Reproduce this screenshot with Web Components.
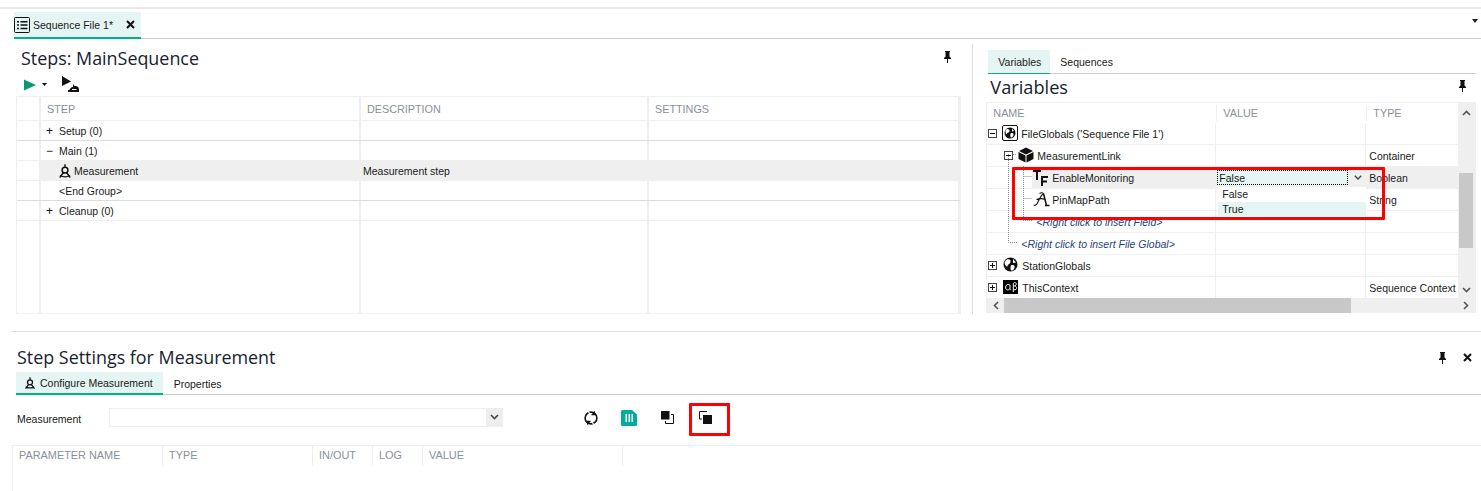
<!DOCTYPE html>
<html lang="en"><head><meta charset="utf-8"><title>Sequence File 1</title>
<style>
html,body{margin:0;padding:0;background:#fff}
body{font:10.5px/16px "Liberation Sans",Arial,sans-serif;color:#1a1a1a;overflow:hidden}
</style></head><body>
<template id="pin"><svg width="11" height="12" viewBox="0 0 11 12"><path d="M3 0h5v1H7.500v4.500L9 7v1H2V7l1.500-1.500V1H3zM5 8h1v4H5z" fill="#111"/></svg></template>
<app-shell></app-shell>
<script>
const ICON={
 compass:`<svg width="14" height="14" viewBox="0 0 14 14" fill="none" stroke="#111"><circle cx="7" cy="6.200" r="2.900" stroke-width="1.500"/><path d="M7 .3v3M5.500 8.500 1.800 13.500M8.500 8.500l3.700 5M2 11.500c3 1.600 7 1.600 10 0" stroke-width="1.400"/></svg>`,
 globeBox:`<svg width="16" height="16" viewBox="0 0 16 16"><rect x=".5" y=".5" width="15" height="15" rx="1.500" fill="#fff" stroke="#111"/><circle cx="8" cy="8" r="5.500" fill="#111"/><path d="M5 4c2 0 3 1 2.500 2.500S5 7.500 4.500 9 3.500 7 3.500 6 4 4.500 5 4zM9 8c2 0 3 .500 2.500 2S10 13 9 12.500 8 9 9 8zM10 3.500l2 2.500-2 .500z" fill="#fff"/></svg>`,
 globe:`<svg width="15" height="15" viewBox="0 0 15 15"><circle cx="7.500" cy="7.500" r="7" fill="#111"/><path d="M4 2.500c2.500-.5 4 .5 3.500 2.500S5 7 4.500 9 2 8 1.700 6.500 2.500 3 4 2.500zM8.500 8c2.500 0 3.500.5 3 2.500S10 14 8.500 13.500 7.500 8.500 8.500 8zM10 2l3 3.500-3 .5z" fill="#fff"/></svg>`,
 cube:`<svg width="16" height="16" viewBox="0 0 16 16"><path d="M8 .5 15 4 8 7.500 1 4zM.5 5l7 3.600V15.500l-7-3.500zM15.500 5l-7 3.600V15.500l7-3.500z" fill="#111"/></svg>`,
 tf:`<svg width="15" height="16" viewBox="0 0 15 16" fill="#111"><path d="M0 0h8v2H5v8H3V2H0zM8 6h7v2h-5v2.500h4v2h-4V16H8z"/></svg>`,
 script:`<svg width="17" height="15" viewBox="0 0 17 15" fill="none" stroke="#111"><path d="M10.500 1.500 13.500 13.500M12 13.500h4.500" stroke-width="1.500"/><path d="M10.500 1.500C8 3 6 8 4.500 11 3.500 13 2 14 .8 12.800M3.500 7.500c2.500-1 6-1 8.500 0M6.500 1.500c1.500-1 3-1 4 0" stroke-width="1.100"/></svg>`,
 ab:`<svg width="15" height="14" viewBox="0 0 15 14"><rect width="15" height="14" fill="#000"/><path d="M7 5.200C6 4 3 4 2.700 7S5 11 7 8.500V5M7 8.500c.2 1.500.8 1.500 1.200 1.200M10.300 12V4c0-2 3-2 3 0 0 1.500-1.500 2-2 2 1.500 0 2.500 1 2.200 2.500S11 10.500 10.300 9" fill="none" stroke="#fff"/></svg>`
};
const sheet=`:host{display:block;box-sizing:border-box}*{box-sizing:border-box}`;
const def=(n,render)=>customElements.define(n,class extends HTMLElement{connectedCallback(){if(this.shadowRoot)return;this.attachShadow({mode:'open'}).innerHTML=`<style>${sheet}${render.css||''}</style>`+render(this)}});
const pinSvg=()=>document.getElementById('pin').innerHTML;

/* tab strip */
const tabsR=el=>`<div class="strip"><slot></slot></div>`;
tabsR.css=`.strip{display:flex;height:100%;border-bottom:1px solid #ccc}`;
def('x-tabs',tabsR);
const tabR=el=>`<slot></slot>`;
tabR.css=`:host{display:flex;align-items:center;height:var(--h,24px);padding:0 var(--p,10px);white-space:nowrap;margin-bottom:-1px;gap:var(--g,4px)}
:host([active]){background:#e5f5f3;border-bottom:var(--b,2px) solid #00b388}`;
def('x-tab',tabR);

/* pane heading */
const headR=el=>`<h2><slot></slot></h2>`;
headR.css=`:host{display:flex;align-items:center;justify-content:space-between}
h2{margin:0;font:400 var(--fs,17.900px)/25px "Open Sans","Noto Sans",sans-serif;color:#18222e}`;
def('x-heading',headR);

/* steps grid */
const stepsR=()=>{
 const row=(st,d,cls,line)=>`<div class="r ${cls||''} ${line?'ln':''}"><i></i><span class="c">${st}</span><span class="c">${d||''}</span><span class="c"></span></div>`;
 return `<div class="g">
 <div class="r h"><i></i><span class="c">STEP</span><span class="c">DESCRIPTION</span><span class="c">SETTINGS</span></div>
 ${row('<b>+</b>Setup (0)','', '',true)}
 ${row('<b>−</b>Main (1)','','')}
 ${row(`<u>${ICON.compass}</u>Measurement`,'Measurement step','sel')}
 ${row('<em></em>&lt;End Group&gt;','','',true)}
 ${row('<b>+</b>Cleanup (0)','','')}
 <div class="fill"><i></i><span></span><span></span><span></span></div></div>`;
};
stepsR.css=`.g{border:1px solid #efefef;height:218px;display:flex;flex-direction:column;width:945px}
.r,.fill{display:grid;grid-template-columns:24px 320px 288px 1fr;height:20px;border-bottom:1px solid #efefef}
.r.ln{border-bottom-color:#dcdcdc}.r.h{height:24px;color:#8a8f9a;border-bottom-color:#efefef;font-size:10.800px}
.fill{flex:1;border:0}
i,.c,.fill span{border-right:2px solid #efefef}.c{display:flex;align-items:center;padding-left:6px;white-space:nowrap}
.r:not(.h) .c:nth-child(3){padding-left:2px}
.sel .c{background:#efefef;border-right-color:#efefef}
b{font-weight:400;width:13px;margin-left:-1px;color:#111;font-size:12px}em{width:12px}
u{display:flex;width:16px;margin-left:11px}`;
def('x-steps',stepsR);

/* variables tree */
const treeR=()=>{
 const box=(x,m)=>`<span class="ex" style="left:${x}px"><svg width="9" height="9" viewBox="0 0 9 9"><rect x=".5" y=".5" width="8" height="8" fill="#fff" stroke="#444"/><path d="M2 4.500h5${m?'':'M4.500 2v5'}" stroke="#111"/></svg></span>`;
 const row=(left,name,val,type,cls)=>`<div class="r ${cls||''}"><span class="n" style="padding-left:${left}px">${name}</span><span class="v">${val||''}</span><span class="t">${type||''}</span></div>`;
 return `<div class="wrap"><div class="h"><span>NAME</span><span>VALUE</span><span>TYPE</span></div>
 ${row(15,`${box(1,1)}<span class="ic">${ICON.globeBox}</span>FileGlobals ('Sequence File 1')`)}
 ${row(31,`${box(17,1)}<span class="ic">${ICON.cube}</span>MeasurementLink`,'','Container')}
 ${row(46,`<span class="ic x">${ICON.tf}</span>EnableMonitoring`,'<span class="ed">False</span><svg class="chev" width="8" height="5" viewBox="0 0 8 5"><path d="M.8.800 4 4 7.200.8" fill="none" stroke="#444" stroke-width="1.400"/></svg>','Boolean','sel')}
 ${row(46,`<span class="ic x">${ICON.script}</span>PinMapPath`,'','String')}
 ${row(49,'<span class="ph">&lt;Right click to insert Field&gt;</span>')}
 ${row(34,'<span class="ph">&lt;Right click to insert File Global&gt;</span>')}
 ${row(16,`${box(1,0)}<span class="ic">${ICON.globe}</span>StationGlobals`)}
 ${row(16,`${box(1,0)}<span class="ic">${ICON.ab}</span>ThisContext`,'','Sequence Context','last')}
 <svg class="dots" width="60" height="150" viewBox="0 0 60 150" fill="none" stroke="#888" stroke-dasharray="1 1"><path d="M21.500 31V119.500H31M26 31.500H30M36.500 43V97.500H46M36.500 53.500H45M36.500 75.500H45"/></svg>
 <div class="menu"><div>False</div><div class="on">True</div></div>
 <div class="vs"><svg width="9" height="6" viewBox="0 0 9 6"><path d="M1 5 4.500 1.500 8 5" fill="none" stroke="#555" stroke-width="1.600"/></svg><span></span><svg width="9" height="6" viewBox="0 0 9 6"><path d="M1 1 4.500 4.500 8 1" fill="none" stroke="#555" stroke-width="1.600"/></svg></div>
 <div class="hs"><svg width="6" height="9" viewBox="0 0 6 9"><path d="M5 1 1.500 4.500 5 8" fill="none" stroke="#555" stroke-width="1.600"/></svg><span></span><svg width="6" height="9" viewBox="0 0 6 9"><path d="M1 1 4.500 4.500 1 8" fill="none" stroke="#555" stroke-width="1.600"/></svg></div>
 <div class="red"></div></div>`;
};
treeR.css=`.wrap{position:relative;width:490px;height:211px;border:1px solid #efefef;border-bottom:0;padding-right:17px}
.h,.r{display:grid;grid-template-columns:229px 150px 1fr}
.h{height:20px;color:#8a8f9a;align-items:center;font-size:10.800px}.h span{padding-left:6px;border-left:1px solid #efefef;height:16px;line-height:16px}.h span:first-child{border:0}
.r{height:22px;border-bottom:1px solid #efefef;white-space:nowrap}
.n{position:relative;display:flex;align-items:center;height:21px;border-right:1px solid #efefef}
.v{position:relative;border-right:1px solid #efefef;display:flex;align-items:center}
.t{display:flex;align-items:center;padding-left:3px}
.sel .t,.sel .v{background:#efefef}.sel .n{background:linear-gradient(90deg,#fff 45px,#efefef 45px)}
.ex{position:absolute;top:6px;display:flex}.ic{display:flex;width:19px;margin-top:-2px}.ic.x{width:19px;margin-top:0}
.ph{font-style:italic;color:#1f4478}
.ed{display:block;margin-left:1px;width:131px;height:15px;line-height:14px;background:#e5f5f3;border:1px dotted #000;padding-left:1px;margin-top:-1px}
.chev{margin-left:6px}
.last{height:21px;border:0}.last .n,.last .v{border-right:1px solid #efefef}
.dots{position:absolute;left:0;top:20px}
.menu{position:absolute;left:231px;top:84px;width:148px;background:#fff;line-height:14.500px}.menu div{height:14.500px;padding-left:4px}.menu .on{background:#e5f5f3}
.vs{position:absolute;right:0;top:0;width:17px;height:196px;background:#efefef;display:flex;flex-direction:column;align-items:center;justify-content:space-between;padding:7px 0 6px}
.vs span{position:absolute;left:1px;top:70px;width:14px;height:75px;background:#c8c8c8}
.hs{position:absolute;left:0;right:0;top:195px;height:15px;background:#efefef;display:flex;align-items:center;justify-content:space-between;padding:0 6px}
.hs span{position:absolute;left:17px;top:0;width:347px;height:100%;background:#c8c8c8}
.red{position:absolute;left:25px;top:64px;width:373px;height:53px;border:3px solid #f00;border-radius:1px;pointer-events:none}`;
def('x-vartree',treeR);

/* toolbar icons */
const ic={
refresh:`<svg width="16" height="16" viewBox="0 0 16 16" fill="none" stroke="#111" stroke-width="1.600"><circle cx="8" cy="8" r="5.900"/><path d="M12 .8v4.400H7.800zM4 15.200v-4.400h4.200z" fill="#111" stroke="none"/><path d="M8 5.800 5 1M8 10.200l3 4.800" stroke="#fff" stroke-width="1.200"/></svg>`,
teal:`<svg width="16" height="16" viewBox="0 0 16 16"><path d="M0 1.500Q0 0 1.500 0H11l5 4.500v10q0 1.500-1.500 1.500h-13Q0 16 0 14.500z" fill="#00ab9f"/><path d="M4.500 4H6v8H4.500zM7.500 4H9v8H7.500zM10.500 4H12v8h-1.500z" fill="#fff"/></svg>`,
front:`<svg width="13" height="13" viewBox="0 0 13 13"><rect width="8.500" height="8.500" fill="#111"/><path d="M10 3.500h2.500v9h-8V10" fill="none" stroke="#111"/></svg>`,
back:`<svg width="13" height="13" viewBox="0 0 13 13"><path d="M8 .5H.5V8H3" fill="none" stroke="#111"/><rect x="4" y="4" width="9" height="9" fill="#111"/></svg>`};

const settingsR=()=>`<div class="head"><x-heading>Step Settings for Measurement</x-heading><span class="act">${pinSvg()}<svg width="9" height="9" viewBox="0 0 9 9"><path d="M1 1l7 7M8 1 1 8" stroke="#111" stroke-width="2"/></svg></span></div>
<x-tabs class="tabs"><x-tab active style="--h:23px;--p:8px;--g:4px;padding-right:10px">${ICON.compass.replace('width="14" height="14"','width="12" height="12"')}Configure Measurement</x-tab><x-tab style="--h:23px;--p:11px">Properties</x-tab></x-tabs>
<div class="form"><label>Measurement</label><div class="combo"><span><svg width="9" height="6" viewBox="0 0 9 6"><path d="M1 1 4.500 4.500 8 1" fill="none" stroke="#444" stroke-width="1.600"/></svg></span></div>
<div class="tools"><span>${ic.refresh}</span><span>${ic.teal}</span><span>${ic.front}</span><span class="hl">${ic.back}</span></div></div>
<div class="params"><span style="width:150px">PARAMETER NAME</span><span style="width:150px">TYPE</span><span style="width:60px">IN/OUT</span><span style="width:50px">LOG</span><span style="width:200px">VALUE</span></div>`;
settingsR.css=`:host{padding-left:1px}
.head{display:flex;justify-content:space-between;align-items:center;margin:13px 0 0 5px;height:25px;padding-right:9px}
.act{display:flex;gap:15px;align-items:center}
.tabs{margin:2px 0 0 0;height:23px;padding-left:4px;display:block}
.form{display:flex;align-items:center;height:32px;margin-top:8px;margin-left:5px;position:relative}
label{width:92px}
.combo{width:394px;height:19px;border:1px solid #eee;display:flex;justify-content:flex-end;margin-top:-4px}
.combo span{width:16px;background:#eee;display:flex;align-items:center;justify-content:center}
.tools{display:flex;margin-left:69px;margin-top:-3px}.tools span{width:38px;height:24px;display:flex;align-items:center;justify-content:center}
.tools .hl{position:relative}
.tools .hl::after{content:"";position:absolute;left:3px;top:-3px;width:41px;height:33px;border:3px solid #f00;border-radius:1px;box-sizing:border-box}
.params{display:flex;margin-top:10px;border-top:1px solid #eee;border-left:1px solid #eee;color:#8a8f9a;align-items:flex-start;height:46px;font-size:10.900px}
.params span{padding-left:6px;height:20px;line-height:19px;border-right:1px solid #eee}`;
def('x-settings',settingsR);

const shellR=()=>`<div class="topline"></div>
<div class="doc"><x-tabs class="docTabs"><x-tab active style="--h:27px;--p:0;--g:3px"><svg width="16" height="16" viewBox="0 0 16 16"><rect x=".5" y=".5" width="15" height="15" rx="1" fill="none" stroke="#111"/><path d="M3 4h2v1.500H3zM6.500 4h7v1.500h-7zM3 7.300h2v1.500H3zM6.500 7.300h7v1.500h-7zM3 10.700h2v1.500H3zM6.500 10.700h7v1.500h-7z" fill="#111"/></svg>Sequence File 1*<svg class="cl" width="9" height="9" viewBox="0 0 9 9"><path d="M1 1l7 7M8 1 1 8" stroke="#111" stroke-width="2"/></svg></x-tab></x-tabs><span class="more"></span></div>
<div class="main">
 <section class="left"><x-heading class="lh">Steps: MainSequence</x-heading><span class="pinL">${pinSvg()}</span>
  <div class="tb"><svg width="12" height="12" viewBox="0 0 12 12"><path d="M0 .5 12 6 0 11.500z" fill="#0a9a70"/></svg><svg class="car" width="5" height="3" viewBox="0 0 5 3"><path d="M0 0h5L2.500 3z" fill="#111"/></svg>
  <svg class="st" width="17" height="17" viewBox="0 0 17 17"><path d="M0 0l9 5.500L0 10z" fill="#111"/><path d="M6 16h11v-2.500c0-3-2.500-4-4.500-3.500L11 8v3c-2 0-3.500 2-3.500 3H6z" fill="#111"/><path d="M10 13.500h4.500" stroke="#fff"/></svg></div>
  <x-steps></x-steps></section>
 <div class="sep"></div>
 <section class="right"><x-tabs class="rt"><x-tab active style="--h:24px;--p:10px;--b:1px;padding-right:9px">Variables</x-tab><x-tab style="--h:24px;--p:10px">Sequences</x-tab></x-tabs>
  <div class="rhead"><x-heading style="--fs:18.200px">Variables</x-heading><span>${pinSvg()}</span></div>
  <x-vartree></x-vartree></section>
</div>
<x-settings class="bot"></x-settings>`;
shellR.css=`:host{width:1481px;height:491px;overflow:hidden}
.topline{height:9px;border-bottom:2px solid #e8e8e8}
.doc{position:relative;height:30px;padding:3px 0 0 11px}.docTabs{height:27px;padding-left:3px;display:block}
.cl{margin-left:10px;margin-right:6px}
.more{position:absolute;right:3px;top:10px;border:3px solid transparent;border-top:4px solid #222;border-bottom:0}
.main{display:flex;height:292px;margin-left:11px}
.left{position:relative;width:962px;padding:7px 0 0 5px}
.lh{margin-left:5px}.pinL{position:absolute;left:931px;top:12px}
.tb{display:flex;align-items:center;height:25px;padding:2px 0 0 8px}.car{margin-left:6px}.st{margin-left:15px}
.sep{width:1px;height:270px;margin-top:5px;background:#ddd}
.right{padding:11px 0 0 13px;width:508px}
.rt{height:24px;padding-left:2px;display:block;width:490px}
.rhead{display:flex;justify-content:space-between;align-items:center;margin:1px 0 2px 4px;height:25px;padding-right:8px;width:486px}
.bot{margin-left:11px;border-top:1px solid #ddd}`;
def('app-shell',shellR);
</script></body></html>
